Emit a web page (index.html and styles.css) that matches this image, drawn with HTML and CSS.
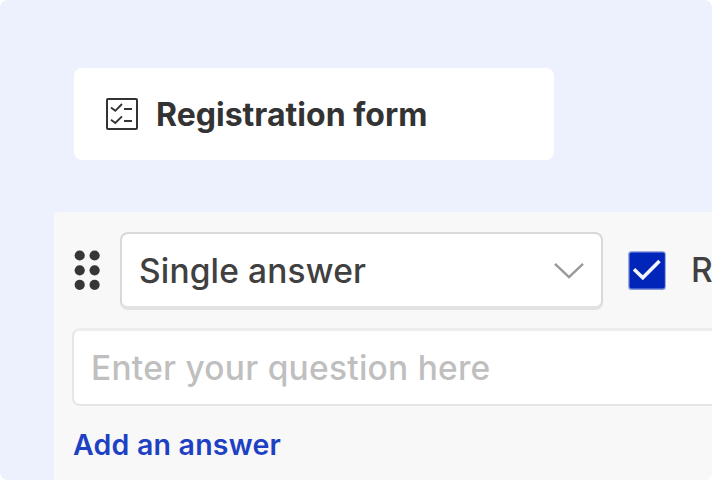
FILE: index.html
```html
<!DOCTYPE html>
<html lang="en">
<head>
<meta charset="utf-8">
<title>Registration form</title>
<link rel="stylesheet" href="styles.css">
</head>
<body>
<main class="stage">
  <header class="form-title">
    <svg class="form-icon" width="32" height="32" viewBox="0 0 32 32" fill="none" stroke="#333" stroke-width="2">
      <rect x="1" y="1" width="30" height="30" rx="1"/>
      <path d="M5 9.5 9.3 12.8 16 6M5 21.7 9.3 25 16 18.3" stroke-width="1.9"/>
      <path d="M18 11h8M18 23h8" stroke-width="2"/>
    </svg>
    <h1 class="title">Registration form</h1>
  </header>
  <section class="question">
    <div class="controls">
      <svg class="handle" width="28" height="42" viewBox="0 0 28 42" fill="#363636">
        <circle cx="7.7" cy="5.5" r="5.1"/><circle cx="22.6" cy="5.5" r="5.1"/>
        <circle cx="7.7" cy="20.3" r="5.1"/><circle cx="22.6" cy="20.3" r="5.1"/>
        <circle cx="7.7" cy="34.8" r="5.1"/><circle cx="22.6" cy="34.8" r="5.1"/>
      </svg>
      <div class="select">
        <span class="select-value">Single answer</span>
        <svg class="chevron" width="32" height="18" viewBox="0 0 32 18" fill="none" stroke="#999" stroke-width="2.4">
          <path d="M2 2.8 16 16.2 30 2.8"/>
        </svg>
      </div>
      <svg class="checkbox" width="38" height="39" viewBox="0 0 38 39" fill="none">
        <rect x=".2" y=".3" width="37.6" height="38.6" rx="3" fill="#8799dd"/>
        <rect x="1.5" y="1.5" width="35.3" height="36" rx="2" fill="#0025b8"/>
        <path d="M6 18.2 14.8 26.8 31.5 10" stroke="#f2f4ff" stroke-width="3.6"/>
      </svg>
      <span class="required">R</span>
    </div>
    <div class="input"><span class="placeholder">Enter your question here</span></div>
    <a class="add">Add an answer</a>
  </section>
</main>
</body>
</html>
```
FILE: styles.css
```css
body {
  margin: 0;
  background: #fff;
  font-family: Inter, "Liberation Sans", sans-serif;
}

.stage {
  box-sizing: border-box;
  width: 712px;
  height: 480px;
  padding: 68px 0 0 54px;
  overflow: hidden;
  border-radius: 8px;
  background: #edf1fe;
}

.form-title {
  display: flex;
  align-items: center;
  box-sizing: border-box;
  width: 480px;
  height: 92px;
  margin: 0 0 52px 20px;
  padding-left: 32px;
  gap: 18px;
  border-radius: 8px;
  background: #fff;
}

.title {
  margin: 2px 0 0;
  color: #333;
  font-size: 32px;
  font-weight: 650;
  letter-spacing: 0.02px;
  line-height: 40px;
}

.question {
  box-sizing: border-box;
  height: 268px;
  padding: 20px 0 0 18px;
  border-top-left-radius: 4px;
  background: #f8f8f8;
  white-space: nowrap;
}

.controls {
  display: flex;
  align-items: center;
  height: 78px;
}

.handle,
.chevron,
.checkbox,
.form-icon {
  flex: none;
}

.select {
  display: flex;
  flex: none;
  align-items: center;
  justify-content: space-between;
  box-sizing: border-box;
  width: 483px;
  height: 78px;
  margin: 0 25px 0 20px;
  padding: 0 16px 0 17px;
  border: 2px solid #d9d9d9;
  border-bottom: 4px solid #e2e2e2;
  border-radius: 8px;
  background: #fff;
}

.select-value,
.required {
  color: #404040;
  font-size: 33.5px;
  font-weight: 450;
  letter-spacing: 0.15px;
  line-height: 42px;
}

.select-value {
  margin-top: 2px;
}

.checkbox {
  margin-top: -2px;
}

.required {
  margin: -2px 0 0 25px;
}

.input {
  display: flex;
  align-items: center;
  box-sizing: border-box;
  width: 680px;
  height: 78px;
  margin-top: 18px;
  padding-left: 17px;
  border: 2px solid #e6e6e6;
  border-top: 3px solid #ededed;
  border-radius: 8px;
  background: #fff;
}

.placeholder {
  margin-top: 1px;
  color: #bfbfbf;
  font-size: 33.5px;
  font-weight: 450;
  letter-spacing: 0.25px;
  line-height: 42px;
}

.add {
  display: block;
  margin: 21px 0 0 1px;
  color: #1e41c4;
  font-size: 28.5px;
  font-weight: 570;
  letter-spacing: 0.22px;
  line-height: 36px;
}
```
